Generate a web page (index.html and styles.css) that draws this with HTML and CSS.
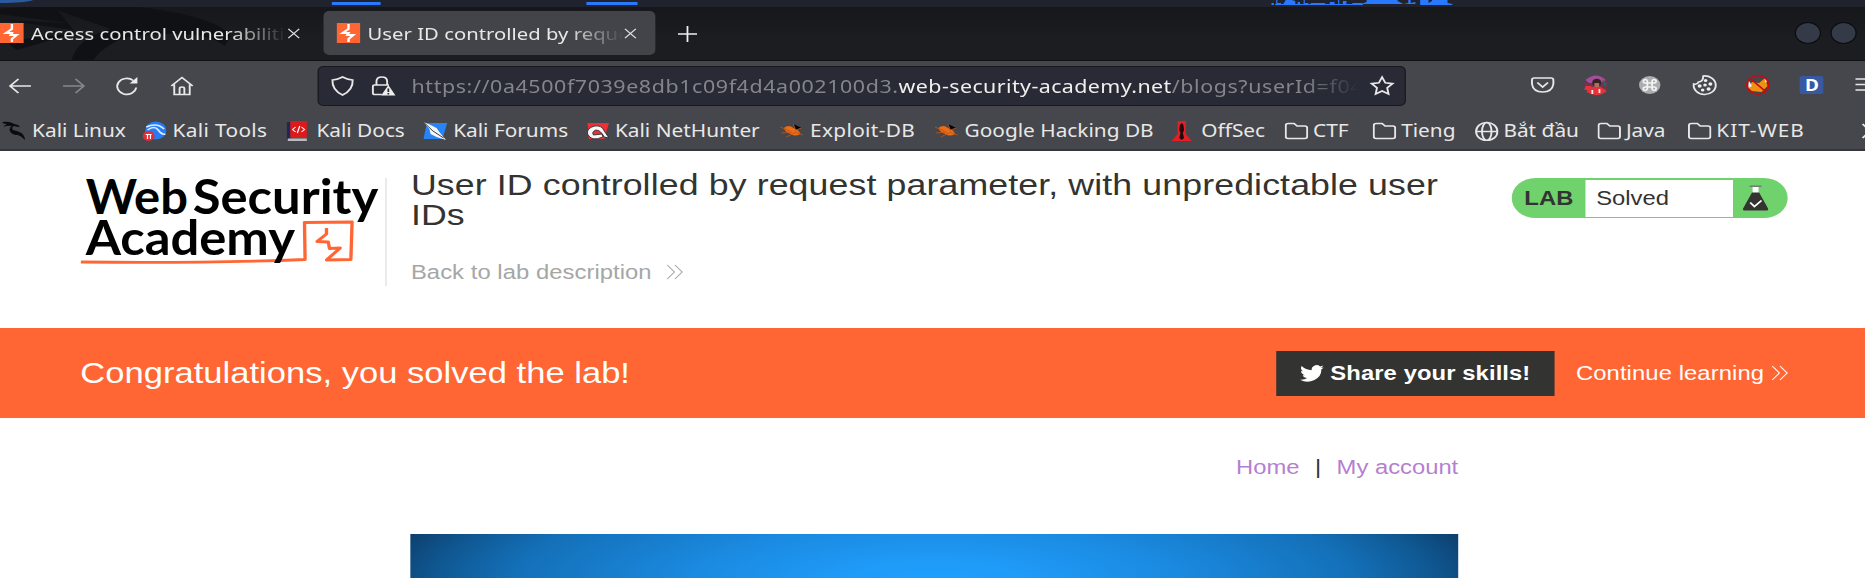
FILE: index.html
```html
<!DOCTYPE html>
<html lang="en">
<head>
<meta charset="utf-8">
<title>User ID controlled by request parameter</title>
<link rel="stylesheet" href="styles.css">
</head>
<body>
<div class="screen">
  <svg class="panel" width="1568" height="7" viewBox="0 0 1568 7">
    <path d="M0 0h28Q22 3 0 3z" fill="#2b5a9c"/>
    <path d="M279 2h41v3h-41zM493 2h43v3h-43z" fill="#2979ff"/>
    <path d="M1072 4h74v1h-74zM1069 3h2v2h-2zM1073 0h1v3h3v2h-4zM1079 4l2-4h5l3 1v3zM1091 2h2v3h-2zM1096 0h1v3h3v2h-4zM1102 3h12v2h-12zM1118 2h4v3h-4zM1125 0h1v5h-1zM1129 1h3v4h-3zM1137 3h8v2h-8zM1144 4l5-2v-2h26v1l5 3 4-1v-3h2v3l4-1v2h-46zM1194 0h7v3l3-2v-1h13v3l4 1v1h-27z" fill="#2979ff"/>
  </svg>

  <header class="tabs">
    <svg class="dragon" width="260" height="53" viewBox="0 0 260 53" fill="#101115"><path d="M0 2Q90-8 145 5q40 9 49 24l-5 10q-13-12-40-12-42-2-55 10-12 8-15 16H60Q66 30 93 22L48 3l14 20-60-10 55 3L0 7zM4 34l60-8-50 17z"/></svg>
    <div class="tab tab-first">
      <svg class="fav" viewBox="0 0 20 20"><path fill="#ff6633" d="M0 0h20v20H0z"/><path d="M10 1v5L5 10h5L9 12h5L10 16v3" fill="none" stroke="#fff" stroke-width="2"/></svg>
      <span class="tab-label">Access control vulnerabilities</span>
      <svg class="x" viewBox="0 0 12 12"><path d="M1 1l10 10M11 1L1 11"/></svg>
    </div>
    <div class="tab tab-active">
      <svg class="fav" viewBox="0 0 20 20"><path fill="#ff6633" d="M0 0h20v20H0z"/><path d="M10 1v5L5 10h5L9 12h5L10 16v3" fill="none" stroke="#fff" stroke-width="2"/></svg>
      <span class="tab-label">User ID controlled by request</span>
      <svg class="x" viewBox="0 0 12 12"><path d="M1 1l10 10M11 1L1 11"/></svg>
    </div>
    <svg class="plus" viewBox="0 0 16 16"><path d="M8 0v16M0 8h16"/></svg>
    <div class="dots"><i></i><i></i></div>
  </header>

  <nav class="toolbar">
    <div class="nav-icons">
      <svg class="ico" viewBox="0 0 20 20"><path d="M19 10H1.500M8.500 3l-7 7 7 7"/></svg>
      <svg class="ico dim" viewBox="0 0 20 20"><path d="M1 10h17.500M11.500 3l7 7-7 7"/></svg>
      <svg class="ico" viewBox="0 0 20 20"><path d="M17.500 11.500A8 8 0 1 1 15 4.500"/><path d="M18.500 1v6.500H12z" fill="#eee" stroke="none"/></svg>
      <svg class="ico" viewBox="0 0 20 20"><path d="M1 10L10 1.500 19 10M3.500 8.500V18.500h13V8.500M8 18v-5.500q0-1.500 2-1.500t2 1.500V18"/></svg>
    </div>
    <div class="urlbar">
      <svg class="ico" viewBox="0 0 20 20"><path d="M10 1Q6 3.500 1.500 4 1 14 10 19 19 14 18.500 4 14 3.500 10 1z"/></svg>
      <svg class="ico lock" viewBox="0 0 20 20"><path d="M4.500 9V5.500q0-4.500 4.500-4.500t4.500 4.500V9M9 18.500H3q-1.500 0-1.500-1.500v-6.500Q1.500 9 3 9h12"/><path d="M14.500 9L20.500 19.500H8.500z" fill="#eee" stroke="none"/><path d="M14.500 12.500v3.500M14.500 17v1.500" stroke="#282a36" stroke-width="1.500"/></svg>
      <span class="url">https://0a4500f7039e8db1c09f4d4a002100d3.<b>web-security-academy.net</b>/blogs?userId=f04</span>
      <svg class="ico star" viewBox="0 0 20 20"><path d="M10 1.200l2.700 5.600 6.100.8-4.500 4.200 1.100 6.200L10 15l-5.400 3 1.100-6.200L1.200 7.600l6.100-.8z"/></svg>
    </div>
    <div class="ext">
      <svg class="ico" viewBox="0 0 20 20"><path d="M3 3h14q2 0 2 2v4q-1 8-9 8T1 9V5q0-2 2-2zM5.500 7.500L10 12l4.500-4.500"/></svg>
      <svg class="ico" viewBox="0 0 20 20"><g stroke="none"><circle cx="10" cy="10" r="10" fill="#6d3550"/><path d="M1 5Q10-4 18 5l-4 3H4z" fill="#a05098"/><path d="M1 11h5v4H0zM2 16l4-4h8l5 4q-8 8-17 1z" fill="#e63238"/><circle cx="10.500" cy="7.500" r="3.800" fill="#392022"/><path d="M8.500 8h4v4h-4z" fill="#ad705d"/><path d="M6 15h1.500v4H6zM12 14h1.500v4H12z" fill="#eee"/><path d="M15 4l4 5-2 3z" fill="#2b6558"/></g></svg>
      <svg class="ico" viewBox="0 0 20 20"><circle cx="10" cy="10" r="9" fill="#adadad" stroke="none"/><path d="M8 8h4v4H8zM8 8H6.500A1.700 1.700 0 1 1 8 6.500zM12 8V6.500A1.700 1.700 0 1 1 13.500 8zM8 12v1.500A1.700 1.700 0 1 1 6.500 12zM12 12h1.500a1.700 1.700 0 1 1-1.500 1.500z" stroke="#f3f3f3" stroke-width="1.500"/></svg>
      <svg class="ico" viewBox="0 0 20 20"><path d="M9 1a9.300 9.300 0 1 1-8 8q3 1 4-2 4 0 4-6z"/><g fill="#eee" stroke="none"><circle cx="11" cy="5.500" r="1.500"/><circle cx="15" cy="9" r="1.700"/><circle cx="6" cy="11" r="1.700"/><circle cx="10.500" cy="10" r="1.500"/><circle cx="8.500" cy="15" r="1.500"/><circle cx="13.500" cy="14" r="1.700"/></g></svg>
      <svg class="ico" viewBox="0 0 20 20"><path d="M1 12L5 7l6 1 5-5 2 8-5 6-8-1z" fill="#ef9212" stroke="none"/><path d="M2 5l3 6-3 2zM16 3l2 3-2 2z" fill="#eee" stroke="none"/><circle cx="10" cy="10" r="9.200" stroke="#c40d10"/><path d="M3.500 3.500l13 13" stroke="#c40d10"/></svg>
      <span class="dbox">D</span>
      <svg class="ico" viewBox="0 0 20 20"><path d="M1 4h18M1 9.500h18M1 15h18"/></svg>
    </div>
  </nav>

  <nav class="bookmarks">
    <a><svg viewBox="0 0 20 20"><path d="M0 1q6-1 10 2 3 0 5 3-3 0-5-1-3 1-1 4 4 1 7 3 3 3 3 7-3-4-6-5-6 0-7-5 0-3 2-4-4-1-7 1 1-2 3-3-2 0-4-1z" fill="#0b0b0d"/></svg><span>Kali Linux</span></a>
    <a class="wide"><svg viewBox="0 0 20 20"><ellipse cx="11" cy="9.500" rx="9" ry="9" fill="#277bf3"/><path d="M3 6q9-5 15 2M4 9q6-5 9 0t6 4" stroke="#dcecff" stroke-width="1.500" fill="none"/><circle cx="5" cy="15" r="5" fill="#e52b37"/><path d="M2.500 13.500h5M4 13.500V18M6.500 13.500V18" stroke="#fff"/></svg><span>Kali Tools</span></a>
    <a><svg viewBox="0 0 20 20"><path d="M0 1h4v17H0z" fill="#1f2855"/><path d="M3 0h14v17H3z" fill="#db1a1e"/><path d="M1 17.500h16v2.500H1z" fill="#bbb"/><path d="M7.500 6L5 8.500 7.500 11M12.500 6L15 8.500 12.500 11M11 5L9 12" stroke="#fff" fill="none"/></svg><span>Kali Docs</span></a>
    <a><svg viewBox="0 0 20 20"><path d="M3 2h17l-4 16H0z" fill="#2684f5"/><path d="M0 1l6 3 5 3 3 5 5 7-8-3-5-3-1-5z" fill="#f5f5f5"/><path d="M0 1l8 9 9 7" fill="none" stroke="#222" stroke-width=".8"/></svg><span>Kali Forums</span></a>
    <a><svg viewBox="0 0 20 20"><path d="M2 2h18l-4 16H3z" fill="#ef2e38"/><path d="M2 13Q1 7 8 5q6-1 8 5l4 7-4-1q-3-7-7-7-4 2-2 5l7-1 1 3q-10 5-13-3z" fill="#f7f7f7" stroke="#29292c" stroke-width=".8"/></svg><span>Kali NetHunter</span></a>
    <a class="wide"><svg viewBox="0 0 20 20"><path d="M3 7q4-4 8 0 5 2 6 6-5 3-8 0-5-2-6-6z" fill="#f16a14"/><path d="M0 6l8 4M1 12l9-1M5 16l7-4M11 3l2 6 5-2M12 11l7 3" stroke="#b6561c" stroke-width=".8"/></svg><span>Exploit-DB</span></a>
    <a><svg viewBox="0 0 20 20"><path d="M3 7q4-4 8 0 5 2 6 6-5 3-8 0-5-2-6-6z" fill="#f16a14"/><path d="M0 6l8 4M1 12l9-1M5 16l7-4M11 3l2 6 5-2M12 11l7 3" stroke="#b6561c" stroke-width=".8"/></svg><span>Google Hacking DB</span></a>
    <a><svg viewBox="0 0 20 20"><path d="M5 0h7v13l5 7H0l5-7z" fill="#e51d25"/><path d="M7 4l1.500-2L10 4l.5 5-1 3 1 5-2 2-2-2 1-5-1-3z" fill="#24090b"/></svg><span>OffSec</span></a>
    <a><svg class="line" viewBox="0 0 20 20"><path d="M3 2.500h5l2.500 2.500H17q2 0 2 2v8.500q0 2-2 2H3q-2 0-2-2v-11q0-2 2-2z"/></svg><span>CTF</span></a>
    <a><svg class="line" viewBox="0 0 20 20"><path d="M3 2.500h5l2.500 2.500H17q2 0 2 2v8.500q0 2-2 2H3q-2 0-2-2v-11q0-2 2-2z"/></svg><span>Tieng</span></a>
    <a><svg class="line" viewBox="0 0 20 20"><circle cx="10" cy="10.500" r="9"/><ellipse cx="10" cy="10.500" rx="4" ry="9"/><path d="M1 10.500h18"/></svg><span>Bắt đầu</span></a>
    <a><svg class="line" viewBox="0 0 20 20"><path d="M3 2.500h5l2.500 2.500H17q2 0 2 2v8.500q0 2-2 2H3q-2 0-2-2v-11q0-2 2-2z"/></svg><span>Java</span></a>
    <a class="wider"><svg class="line" viewBox="0 0 20 20"><path d="M3 2.500h5l2.500 2.500H17q2 0 2 2v8.500q0 2-2 2H3q-2 0-2-2v-11q0-2 2-2z"/></svg><span>KIT-WEB</span></a>
    <a><svg class="line" viewBox="0 0 20 20"><path d="M1 3l6 7-6 7M8 3l6 7-6 7"/></svg></a>
  </nav>

  <main class="page">
    <section class="lab-header">
      <svg class="logo" width="256" height="92" viewBox="68 174 256 92">
        <path d="M68 262q100 1.500 188.500-2.500l-.5-37 40-.5-1 37.500-20.500.5 11.500-12-9 .5-1-6.500-9.500-.5 8-7.500v-6" fill="none" stroke="#ff6633" stroke-width="2.800" stroke-linejoin="round"/>
        <g class="logo-text">
          <text x="72" y="214.500" textLength="86" lengthAdjust="spacingAndGlyphs">Web</text>
          <text x="162" y="214.500" textLength="156" lengthAdjust="spacingAndGlyphs">Security</text>
          <text x="72" y="255.500" textLength="176" lengthAdjust="spacingAndGlyphs">Academy</text>
        </g>
      </svg>
      <div class="title">
        <h2>User ID controlled by request parameter, with unpredictable user IDs</h2>
        <a class="back">Back to lab description <svg class="chev" viewBox="0 0 15 16"><path d="M1 1l6 7-6 7M7.500 1l6 7-6 7"/></svg></a>
      </div>
      <div class="status">
        <b>LAB</b><span>Solved</span>
        <svg width="22" height="26" viewBox="0 0 22 26"><path d="M6 .5h10v1.500H6z" fill="#777"/><path d="M8.500 2h5v6h-5z" fill="#fff"/><path d="M8 7.500h6l7.500 16q.5 2-1.500 2H2q-2 0-1.500-2z" fill="#333332"/><path d="M6.500 17.500l3.500 4 6-6" stroke="#fff" stroke-width="1.600" fill="none"/></svg>
      </div>
    </section>
    <section class="banner">
      <h3>Congratulations, you solved the lab!</h3>
      <a class="share"><svg viewBox="0 0 24 20"><path d="M24 2.400c-.9.400-1.800.6-2.800.8 1-.6 1.800-1.600 2.200-2.700-1 .6-2 1-3.100 1.200A4.900 4.900 0 0 0 11.900 6.200C7.800 6 4.200 4.100 1.700 1.100A4.900 4.900 0 0 0 3.200 7.700c-.8 0-1.600-.2-2.200-.6 0 2.300 1.600 4.400 3.900 4.900-.7.200-1.500.2-2.200.1.600 2 2.400 3.400 4.600 3.400A9.900 9.900 0 0 1 0 17.500 14 14 0 0 0 21.500 5c1-.7 1.800-1.600 2.500-2.600z" fill="#fff"/></svg>Share your skills!</a>
      <a class="continue">Continue learning<svg class="chev" viewBox="0 0 15 16"><path d="M1 1l6 7-6 7M7.500 1l6 7-6 7"/></svg></a>
    </section>
    <div class="account"><a>Home</a><i>|</i><a>My account</a></div>
    <div class="hero"></div>
  </main>
</div>
</body>
</html>
```
FILE: styles.css
```css
* { box-sizing: border-box; }
html, body { margin: 0; height: 578px; overflow: hidden; background: #fff; }
.screen { width: 1568px; height: 578px; overflow: hidden; transform: scaleX(1.18941); transform-origin: 0 0; display: flex; flex-direction: column; font-family: "Noto Sans", sans-serif; font-size: 17px; color: #e8e8e6; }
.screen > * { flex-shrink: 0; }
svg { display: block; flex: none; }
.panel { background: #20222d; }

.tabs { height: 54px; background: linear-gradient(#16171b, #1c1d21 60%); border-bottom: 1px solid #101114; display: flex; align-items: flex-start; position: relative; }
.dragon { position: absolute; left: 0; top: 0; }
.tab { position: relative; height: 44px; margin-top: 4px; display: flex; align-items: center; }
.tab-first { width: 260px; }
.tab-first .fav { width: 20px; }
.tab-active { margin-left: 12px; width: 279px; padding-left: 11px; background: #42444a; border-radius: 5px; }
.fav { width: 20px; height: 20px; margin-right: 6px; }
.tab-label { width: 215px; overflow: hidden; white-space: nowrap; letter-spacing: .03px; -webkit-mask-image: linear-gradient(90deg, #000 78%, transparent); mask-image: linear-gradient(90deg, #000 78%, transparent); }
.x { width: 12px; height: 11px; fill: none; stroke: #ddd; stroke-width: 1.3; }
.plus { width: 16px; height: 16px; margin: 19px 0 0 19px; stroke: #eee; stroke-width: 1.5; }
.dots { margin: 15px 7px 0 auto; display: flex; gap: 8px; }
.dots i { width: 22px; height: 22px; border-radius: 50%; background: #343a48; border: 1px solid #0b0c0e; }

.toolbar { height: 48px; background: #45474d; display: flex; padding-top: 5px; position: relative; }
.ico { width: 20px; height: 20px; fill: none; stroke: #e8e8e8; stroke-width: 1.6; overflow: visible; }
.dim { opacity: .4; }
.nav-icons { flex: none; width: 267px; padding: 10px 0 0 7px; display: flex; gap: 25.2px; }
.urlbar { flex: none; width: 915px; height: 40px; background: #282a36; border: 1px solid #17181d; border-radius: 5px; display: flex; align-items: center; padding-left: 10px; }
.lock { margin-left: 14px; }
.url { margin-left: 14px; width: 797px; overflow: hidden; white-space: nowrap; color: #84868c; font-size: 18px; letter-spacing: .5px; -webkit-mask-image: linear-gradient(90deg, #000 94%, transparent); mask-image: linear-gradient(90deg, #000 94%, transparent); }
.url b { font-weight: 400; color: #f0f0ee; letter-spacing: .35px; }
.star { margin-left: 9px; }
.ext { flex: none; margin-left: 104.500px; padding-top: 9px; display: flex; gap: 25.4px; }
.dbox { width: 20px; height: 18px; margin: 1px 0; background: #3858a2; border-radius: 2px; color: #fff; font-weight: 700; font-size: 16px; line-height: 18px; text-align: center; }

.bookmarks { height: 42px; background: #45474d; border-bottom: 2px solid #35363a; display: grid; grid-template-columns: 118px 121px 115px 136px 164px 130px 199px 95px 74px 86px 103px 76px 146px 20px; padding: 6px 0 0 2px; font-size: 17.5px; }
.bookmarks a { display: flex; align-items: flex-start; gap: 5px; padding-top: 6px; white-space: nowrap; }
.bookmarks svg { width: 20px; height: 20px; }
.bookmarks a:nth-child(n+9) { gap: 4px; }
.bookmarks span { line-height: 20px; margin-top: -1px; }
.bookmarks .wide { letter-spacing: .3px; }
.bookmarks .wider { letter-spacing: .8px; }
.line { fill: none; stroke: #e8e8e8; stroke-width: 1.6; }

.page { height: 427px; background: #fff; color: #333332; font-family: "Liberation Sans", Arial, sans-serif; font-size: 20px; }
.lab-header { height: 177px; display: flex; padding-left: 68px; align-items: flex-start; }
.logo { margin-top: 23px; overflow: visible; }
.logo-text { font: 700 47px Lato, sans-serif; fill: #000; }
.title { margin: 27px 0 0; border-left: 1px solid #ddd; height: 108px; padding-left: 20.500px; width: 901px; }
.title h2 { margin: -8px 0 0; font-size: 30px; letter-spacing: .1px; line-height: 30px; font-weight: 400; }
.back { display: flex; align-items: center; color: #a6a6a6; line-height: 24px; margin-top: 30px; letter-spacing: .05px; }
.chev { width: 15px; height: 16px; fill: none; stroke: currentColor; stroke-width: 1; margin-left: 12px; }
.status { margin: 27px 0 0 46px; width: 232px; height: 40px; border-radius: 20px; background: #70d26c; display: flex; align-items: center; }
.status b { width: 61.500px; padding: 1px 0 0 10.500px; letter-spacing: .15px; }
.status span { width: 124px; height: 37px; line-height: 37px; padding-left: 9.500px; background: #fff; }
.status svg { margin-left: 8px; }
.banner { height: 90px; background: #ff6633; color: #fff; display: flex; align-items: center; padding-left: 67.500px; }
.banner h3 { margin: 0; width: 1005px; font-weight: 400; font-size: 29px; line-height: 34px; letter-spacing: .03px; }
.share { width: 234.500px; height: 45px; background: #333332; display: flex; align-items: center; padding-left: 20px; font-weight: 700; white-space: nowrap; letter-spacing: .08px; }
.share svg { width: 20px; height: 17px; margin-right: 6px; }
.continue { margin-left: 18px; display: flex; align-items: center; white-space: nowrap; letter-spacing: .08px; }
.continue .chev { margin-left: 6px; }
.account { height: 116px; width: 1226px; display: flex; justify-content: flex-end; gap: 13px; padding-top: 38px; line-height: 23px; }
.account a { color: #b57fd0; }
.account i { font-style: normal; }
.hero { margin-left: 344.500px; width: 881.500px; height: 200px; background: radial-gradient(ellipse 490px 140px at 50% 48px, #1f9fff 0, #1f9bf8 15%, #1b8be2 40%, #1470b8 72%, #0f5791 86%, #0d3a66 98%); }
```
